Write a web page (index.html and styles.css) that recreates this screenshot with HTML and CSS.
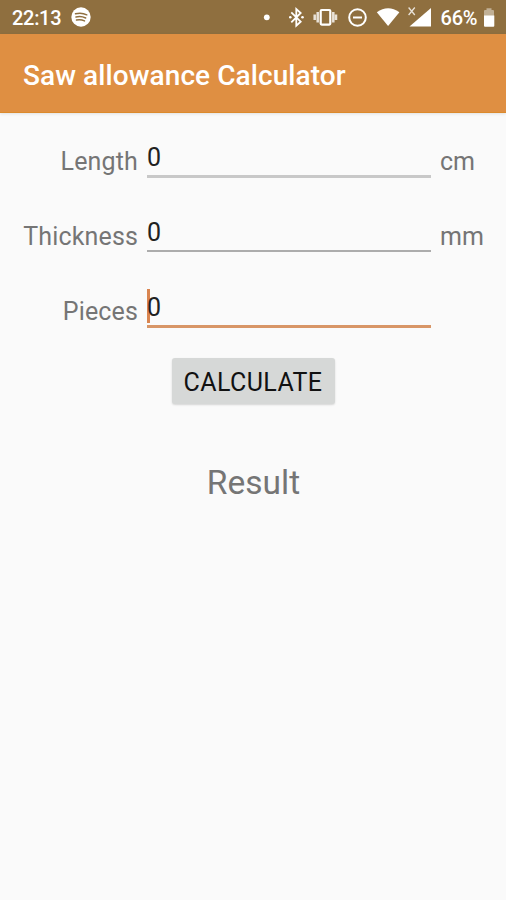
FILE: index.html
```
<!DOCTYPE html>
<html lang="en">
<head>
    <meta charset="UTF-8">
    <meta name="viewport" content="width=device-width, initial-scale=1.0">
    <title>Saw allowance Calculator</title>
    <link rel="stylesheet" href="styles.css">
</head>
<body>
    <!-- Status bar -->
    <div class="status-bar">
        <span class="clock">22:13</span>
        <svg class="spotify" width="20" height="20" viewBox="0 0 20 20">
            <circle cx="10" cy="10" r="9.7" fill="#fff"/>
            <path d="M4.5 6.8q6-1.6 11.3 1M5 10q5-1.300 9.700 1M5.500 13.100q4.200-1 8 .8" fill="none" stroke="#8f6f3f" stroke-width="1.500" stroke-linecap="round"/>
        </svg>
        <svg class="status-icons" width="256" height="34" viewBox="250 0 256 34" fill="#fff">
            <circle cx="266.800" cy="17.300" r="2.900"/>
            <!-- bluetooth -->
            <path d="M291.300 12.300l9.400 9.400-4.400 4V9l4.400 4-9.400 9.400" fill="none" stroke="#fff" stroke-width="1.800"/>
            <circle cx="290.300" cy="17.300" r="1.300"/>
            <circle cx="302.500" cy="17.300" r="1.300"/>
            <!-- vibrate -->
            <rect x="320.700" y="10" width="9.600" height="14.600" rx="1" fill="none" stroke="#fff" stroke-width="2.200"/>
            <path d="M317.700 12v10.600M333.300 12v10.600M314.700 14.500v5.600M336 14.500v5.600" fill="none" stroke="#fff" stroke-opacity=".8" stroke-width="2.500"/>
            <!-- do not disturb -->
            <circle cx="357.500" cy="17.500" r="8.300" fill="none" stroke="#fff" stroke-width="2"/>
            <path d="M353 16.500h9v2h-9z"/>
            <!-- wifi -->
            <path d="M376.800 12.300q11.300-8.200 22.600 0L388.100 26z"/>
            <!-- mobile signal -->
            <path d="M431 8v18.500h-21.500z"/>
            <path d="M408.600 7.500l6.200 7.500M414.800 7.500l-6.200 7.500" stroke="#fff" stroke-opacity=".8" stroke-width="1.300"/>
            <text class="battery-level" x="440.500" y="25" textLength="37">66%</text>
            <!-- battery -->
            <path d="M484 16v-5q0-1 1-1h1.500V8.300h5V10h1.500q1 0 1 1v5z" fill-opacity=".45"/>
            <path d="M484 15.500h10.300V25.700q0 1-1 1H485q-1 0-1-1z"/>
        </svg>
    </div>

    <header>
        <h1>Saw allowance Calculator</h1>
    </header>

    <form class="calculator">
        <div class="row">
            <label for="length">Length</label>
            <div class="field"><input id="length" type="text" value="0"></div>
            <span class="unit">cm</span>
        </div>
        <div class="row">
            <label for="thickness">Thickness</label>
            <div class="field thin"><input id="thickness" type="text" value="0"></div>
            <span class="unit">mm</span>
        </div>
        <div class="row">
            <label for="pieces">Pieces</label>
            <div class="field active">
                <span class="caret"></span>
                <input id="pieces" type="text" value="0">
            </div>
        </div>
        <button type="button">CALCULATE</button>
        <p class="result">Result</p>
    </form>
</body>
</html>
```

FILE: styles.css
```
body {
    font-family: Roboto, sans-serif;
    margin: 0;
    min-height: 900px;
    background-color: #fafafa;
    color: #757575;
}

.status-bar {
    display: flex;
    align-items: center;
    height: 34px;
    background-color: #8f6f3f;
    color: #fff;
}

.clock {
    width: 59px;
    padding-left: 12px;
    padding-top: 2px;
    font-size: 20px;
    font-weight: 500;
    letter-spacing: -0.3px;
}

.status-icons {
    margin-left: auto;
}

.battery-level {
    font-size: 20px;
    font-weight: 500;
}

header {
    display: flex;
    align-items: center;
    height: 78px;
    padding-left: 23px;
    background-color: #df8f42;
    border-bottom: 1px solid #dc8a2c;
    box-shadow: 0 1px 3px rgba(0, 0, 0, 0.1);
}

h1 {
    margin: 0;
    padding-top: 4px;
    color: #fff;
    font-size: 28px;
    font-weight: 500;
    letter-spacing: 0.08px;
}

.calculator {
    display: flex;
    flex-direction: column;
    align-items: center;
    padding-top: 11px;
}

.row {
    display: grid;
    grid-template-columns: 138px 284px 57px;
    column-gap: 9px;
    width: 100%;
    height: 75px;
    font-size: 25px;
    line-height: 35px;
}

.row label,
.unit {
    padding-top: 20px;
}

.row label {
    text-align: right;
    letter-spacing: 0.15px;
}

.field {
    position: relative;
    height: 35px;
    margin-top: 16px;
    border-bottom: 3px solid #c8c8c8;
}

.field.thin {
    border-bottom: 2px solid #acacac;
}

.field.active {
    border-bottom-color: #d89667;
}

.field input {
    position: relative;
    display: block;
    box-sizing: border-box;
    width: 100%;
    height: 35px;
    padding: 0;
    border: none;
    outline: none;
    background: none;
    color: #212121;
    font: inherit;
}

.caret {
    position: absolute;
    top: -1px;
    left: 0;
    width: 3px;
    height: 34px;
    background-color: #d98550;
}

button {
    width: 163px;
    height: 46px;
    margin-top: 9px;
    padding: 3px 0 0;
    border: none;
    border-radius: 3px;
    background-color: #d6d8d7;
    box-shadow: 0 1px 2px rgba(0, 0, 0, 0.15);
    color: #111;
    font-family: inherit;
    font-size: 25px;
    font-weight: 400;
    letter-spacing: 0.4px;
}

.result {
    margin: 59px 0 0;
    padding-left: 1px;
    font-size: 33.5px;
    line-height: 40px;
}
```
